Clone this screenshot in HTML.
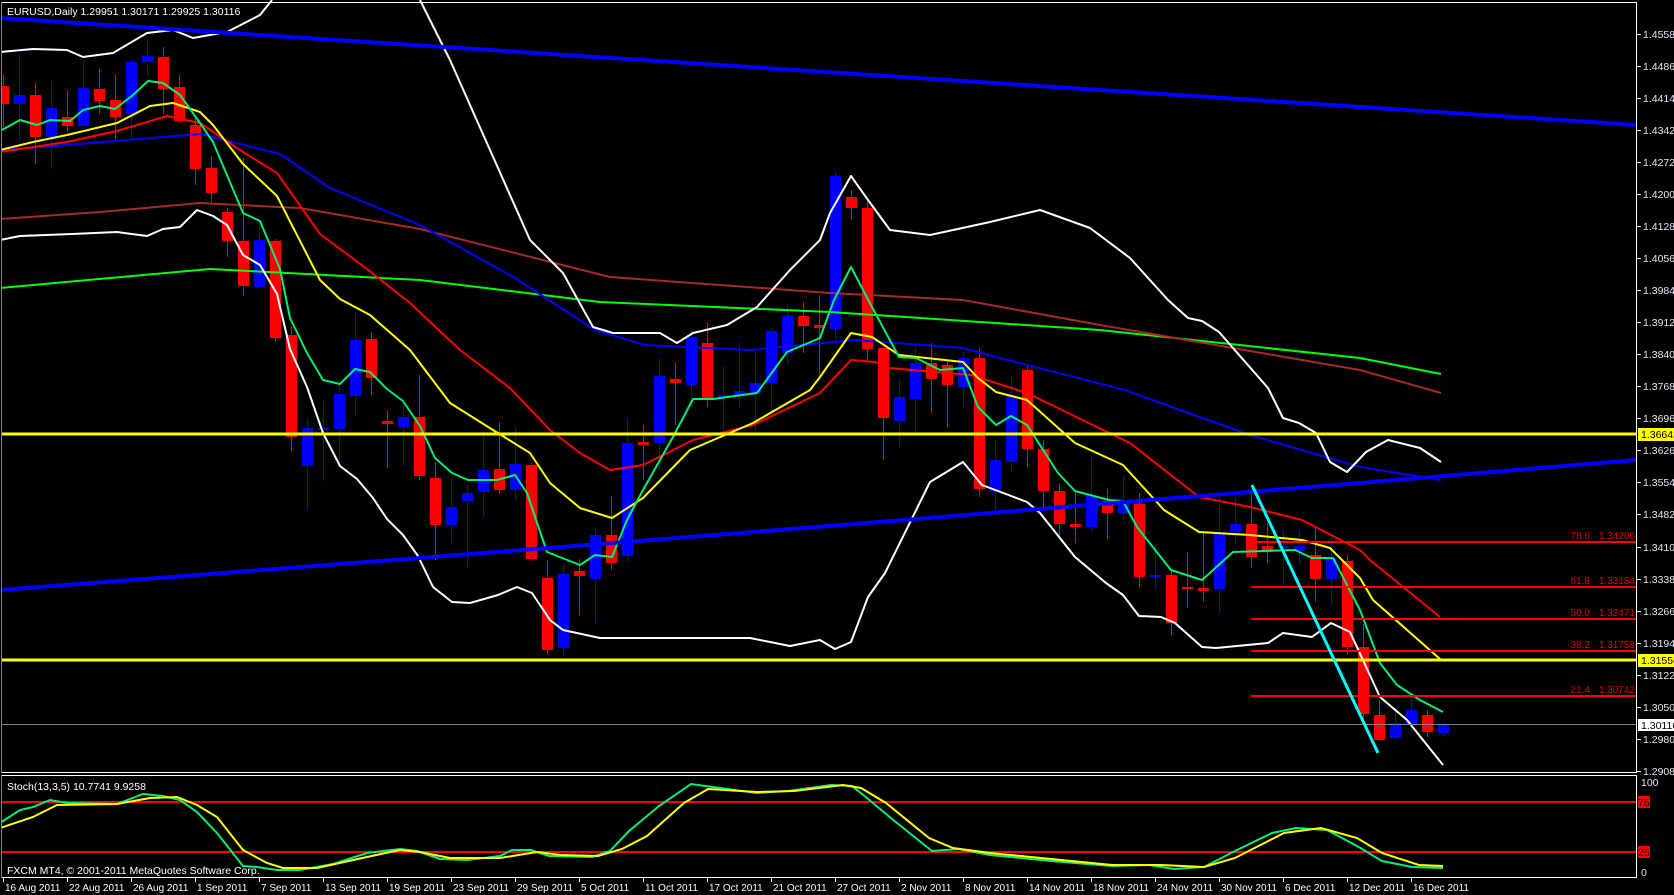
<!DOCTYPE html>
<html><head><meta charset="utf-8"><style>
html,body{margin:0;padding:0;background:#000;width:1674px;height:895px;overflow:hidden}
svg{display:block}
text{font-family:"Liberation Sans",sans-serif}
</style></head><body>
<svg width="1674" height="895" viewBox="0 0 1674 895" xmlns="http://www.w3.org/2000/svg">
<rect width="1674" height="895" fill="#000"/>
<!-- candles -->
<g stroke-linecap="butt" fill="none">
<path stroke="#f00" stroke-width="1" d="M3.5 74V127M35.5 83V164M67.5 90V131M99.5 69V114M115.5 74V139M163.5 47V114M179.5 75V123M195.5 118V185M211.5 156V202M227.5 208V257M243.5 158V296M275.5 239V341M291.5 326V451M371.5 332V395M387.5 410V468M419.5 375V480M435.5 462V560M499.5 422V493M531.5 463V561M547.5 560V655M579.5 559V615M611.5 496V570M643.5 425V480M675.5 362V425M707.5 322V407M803.5 302V353M819.5 295V375M851.5 190V220M867.5 199V360M883.5 348V460M931.5 343V413M947.5 360V427M979.5 348V497M1027.5 365V467M1043.5 440V507M1059.5 483V538M1075.5 492V543M1107.5 489V539M1139.5 493V587M1171.5 570V635M1187.5 552V608M1203.5 533V602M1251.5 493V568M1267.5 523V563M1315.5 527V602M1347.5 555V655M1363.5 624V720M1379.5 700V740M1427.5 710V737"/>
<path stroke="#f00" stroke-width="11" d="M3.5 86V104M35.5 95V137M67.5 117V126M99.5 89V101M115.5 100V117M163.5 57V89M179.5 87V121M195.5 125V169M211.5 168V193M227.5 212V241M243.5 241V286M275.5 241V338M291.5 335V437M371.5 339V378M387.5 421V424M419.5 417V476M435.5 478V525M499.5 469V490M531.5 465V559M547.5 578V650M579.5 571V576M611.5 535V563M643.5 442V445M675.5 379V383M707.5 343V400M803.5 316V326M819.5 325V328M851.5 197V208M867.5 208V349M883.5 348V418M931.5 363V379M947.5 365V385M979.5 358V489M1027.5 370V449M1043.5 449V491M1059.5 491V524M1075.5 524V527M1107.5 501V513M1139.5 504V577M1171.5 575V623M1187.5 587V589M1203.5 588V591M1251.5 524V557M1267.5 546V552M1315.5 555V579M1347.5 561V647M1363.5 647V714M1379.5 715V740M1427.5 715V732"/>
<path stroke="#00f" stroke-width="1" d="M19.5 54V141M51.5 81V169M83.5 60V129M131.5 60V139M147.5 39V77M259.5 219V288M307.5 420V510M323.5 401V481M339.5 384V464M355.5 313V416M403.5 401V466M451.5 477V543M467.5 485V568M483.5 432V517M515.5 427V499M563.5 565V655M595.5 528V623M627.5 418V562M659.5 358V470M691.5 330V407M723.5 366V430M739.5 342V407M755.5 353V437M771.5 327V413M787.5 304V363M835.5 171V343M899.5 380V447M915.5 348V437M963.5 352V407M995.5 439V513M1011.5 376V472M1091.5 457V531M1123.5 477V521M1155.5 543V589M1219.5 497V613M1235.5 498V545M1283.5 530V585M1299.5 530V563M1331.5 537V605M1395.5 708V740M1411.5 697V733M1443.5 722V737"/>
<path stroke="#00f" stroke-width="11" d="M19.5 95V104M51.5 108V137M83.5 88V126M131.5 62V114M147.5 56V62M259.5 240V287M307.5 428V466M323.5 428V430M339.5 394V429M355.5 340V396M403.5 417V427M451.5 507V525M467.5 493V501M483.5 470V492M515.5 464V490M563.5 574V648M595.5 535V579M627.5 443V556M659.5 376V443M691.5 337V385M723.5 395V397M739.5 391V395M755.5 383V393M771.5 331V383M787.5 316V353M835.5 176V329M899.5 397V421M915.5 363V399M963.5 358V387M995.5 460V492M1011.5 396V462M1091.5 496V527M1123.5 504V513M1155.5 575V577M1219.5 532V589M1235.5 524V532M1283.5 546V548M1299.5 546V551M1331.5 558V579M1395.5 723V738M1411.5 710V724M1443.5 725V733"/>
</g>
<!-- MAs -->
<g fill="none" stroke-width="2" stroke-linejoin="round">
<polyline stroke="#00ff00" points="0,288 210,269 420,280 600,302 830,312 1100,330 1360,358 1441,374"/>
<polyline stroke="#a52a2a" points="0,219 100,212 200,203 300,208 420,229 610,277 830,293 963,300 1100,325 1360,370 1441,393"/>
<polyline stroke="#0000ff" points="0,150 67,145 200,134 280,154 330,188 420,225 515,278 595,330 645,345 750,350 855,340 963,348 1000,358 1125,390 1180,410 1250,435 1360,467 1441,480"/>
<polyline stroke="#ff0000" points="0,152 67,142 117,131 167,116 200,123 240,150 277,173 320,234 367,269 410,303 460,350 510,388 550,430 580,453 610,470 643,465 693,440 753,425 820,393 851,360 875,362 889,368 971,375 1027,393 1130,443 1199,497 1250,507 1302,520 1360,550 1370,560 1440,617"/>
<polyline stroke="#ffff00" points="0,150 33,142 67,135 117,123 150,106 173,103 200,112 213,125 243,164 277,196 320,280 340,299 370,315 410,350 450,403 493,430 530,453 550,483 580,508 612,518 643,498 690,450 753,423 810,390 820,377 851,333 872,337 899,355 963,362 978,378 996,392 1027,400 1075,443 1123,465 1164,510 1199,532 1250,535 1302,540 1330,548 1360,578 1373,600 1440,659"/>
<polyline stroke="#00ee77" points="0,131 20,120 37,125 50,120 70,121 83,110 100,106 115,109 133,95 148,81 163,83 180,95 200,123 213,142 243,213 260,221 280,269 290,318 307,353 323,380 340,384 355,369 370,372 387,389 403,401 420,426 435,458 452,473 468,480 497,480 515,475 527,493 547,552 580,565 595,555 612,557 627,520 643,490 673,437 693,399 713,399 757,393 787,352 820,338 834,300 851,267 872,307 899,357 916,358 940,370 963,368 978,407 996,425 1011,416 1027,425 1058,473 1075,491 1109,500 1123,501 1137,527 1171,570 1202,580 1233,552 1295,550 1312,558 1333,558 1360,610 1380,663 1397,685 1420,700 1443,712"/>
<polyline stroke="#ffffff" points="0,52 33,49 67,50 83,57 113,53 147,33 173,30 193,38 227,32 260,15 272,0"/>
<polyline stroke="#ffffff" points="420,0 450,60 490,150 530,240 563,273 593,327 613,333 660,333 677,343 693,333 727,325 757,307 790,270 820,240 830,213 851,176 868,200 890,230 930,235 990,222 1040,210 1090,228 1130,258 1168,300 1188,318 1202,321 1219,332 1268,388 1283,418 1299,423 1316,433 1330,462 1347,472 1366,452 1388,440 1420,448 1441,462"/>
<polyline stroke="#ffffff" points="0,240 20,236 72,234 117,232 147,236 163,229 180,227 197,210 213,216 227,225 243,255 260,265 277,294 290,349 307,387 323,433 340,466 357,479 373,498 387,519 403,535 418,556 433,587 452,602 470,603 498,595 517,587 532,593 550,620 563,630 600,638 750,638 790,646 820,640 835,649 851,642 868,597 885,573 930,482 963,462 982,485 1027,502 1040,513 1075,557 1106,583 1123,595 1139,616 1161,617 1175,623 1202,647 1216,648 1268,643 1283,633 1312,637 1331,623 1350,632 1380,697 1407,720 1443,765"/>
</g>
<!-- trendlines -->
<g fill="none">
<line x1="0" y1="18" x2="1636" y2="125" stroke="#0000ff" stroke-width="4"/>
<polyline points="0,590 420,558 830,526 1360,483 1636,460" stroke="#0000ff" stroke-width="4"/>
<line x1="0" y1="434" x2="1636" y2="434" stroke="#ffff00" stroke-width="3"/>
<line x1="0" y1="660" x2="1636" y2="660" stroke="#ffff00" stroke-width="3"/>
<line x1="0" y1="724.5" x2="1636" y2="724.5" stroke="#808080" stroke-width="1"/>
<g stroke="#ff0000" stroke-width="2">
<line x1="1251" y1="542" x2="1636" y2="542"/><line x1="1251" y1="587" x2="1636" y2="587"/><line x1="1251" y1="619" x2="1636" y2="619"/><line x1="1251" y1="651" x2="1636" y2="651"/><line x1="1251" y1="696" x2="1636" y2="696"/>
</g>
<line x1="1252" y1="485" x2="1378" y2="753" stroke="#00ffff" stroke-width="3"/>
</g>
<g fill="#e00000" font-size="10" text-anchor="end">
<text x="1590" y="539">78.6</text><text x="1635" y="539">1.34200</text>
<text x="1590" y="584">61.8</text><text x="1635" y="584">1.33184</text>
<text x="1590" y="616">50.0</text><text x="1635" y="616">1.32471</text>
<text x="1590" y="648">38.2</text><text x="1635" y="648">1.31758</text>
<text x="1590" y="693">21.4</text><text x="1635" y="693">1.30742</text>
</g>
<!-- stochastic -->
<g fill="none" stroke-width="2">
<line x1="0" y1="802" x2="1636" y2="802" stroke="#ff0000"/>
<line x1="0" y1="852" x2="1636" y2="852" stroke="#ff0000"/>
<polyline stroke="#00ee77" points="0,823 20,810 33,807 50,800 67,803 117,804 143,794 163,796 180,800 197,812 217,833 243,866 257,867 277,870 300,870 333,864 367,853 400,849 417,851 440,859 467,860 500,856 512,850 531,850 549,856 592,857 610,851 629,831 659,806 691,784 720,788 757,793 788,791 831,785 852,786 867,798 892,819 932,851 959,849 990,855 1051,861 1112,866 1149,865 1174,869 1204,867 1235,851 1272,833 1296,828 1327,830 1357,846 1382,861 1412,867 1443,868"/>
<polyline stroke="#ffff00" points="0,828 33,817 57,805 117,804 150,798 177,797 197,805 217,817 243,850 267,863 283,868 317,868 367,857 400,850 420,852 450,858 500,858 537,852 561,855 598,856 622,849 647,836 684,803 708,789 757,792 794,791 843,785 861,788 886,803 929,838 953,848 990,853 1051,859 1112,865 1161,865 1204,867 1235,858 1284,833 1321,828 1357,838 1382,853 1419,865 1443,866"/>
</g>
<!-- frames -->
<g fill="none" stroke="#fff" stroke-width="1">
<rect x="1.5" y="2.5" width="1635" height="770"/>
<rect x="1.5" y="775.5" width="1635" height="102"/>
</g>
<rect x="0" y="0" width="1.5" height="895" fill="#000"/>
<!-- texts -->
<g fill="#fff" font-size="10.5">
<text x="7" y="15">EURUSD,Daily  1.29951 1.30171 1.29925 1.30116</text>
<text x="7" y="790">Stoch(13,3,5) 10.7741 9.9258</text>
<text x="7" y="874">FXCM MT4, © 2001-2011 MetaQuotes Software Corp.</text>
</g>
<!-- right axis -->
<g stroke="#fff" stroke-width="1">
<path d="M1637 34.5h4M1637 66.5h4M1637 98.5h4M1637 130.5h4M1637 162.5h4M1637 194.5h4M1637 226.5h4M1637 258.5h4M1637 290.5h4M1637 322.5h4M1637 354.5h4M1637 386.5h4M1637 418.5h4M1637 450.5h4M1637 482.5h4M1637 514.5h4M1637 547.5h4M1637 579.5h4M1637 611.5h4M1637 643.5h4M1637 675.5h4M1637 707.5h4M1637 739.5h4M1637 771.5h4"/>
<path d="M3.5 878v4M67.5 878v4M131.5 878v4M195.5 878v4M259.5 878v4M323.5 878v4M387.5 878v4M451.5 878v4M515.5 878v4M579.5 878v4M643.5 878v4M707.5 878v4M771.5 878v4M835.5 878v4M899.5 878v4M963.5 878v4M1027.5 878v4M1091.5 878v4M1155.5 878v4M1219.5 878v4M1283.5 878v4M1347.5 878v4M1411.5 878v4"/>
</g>
<g fill="#dfe8f2" font-size="10.5">
<text x="1643" y="38">1.45580</text><text x="1643" y="70">1.44860</text><text x="1643" y="102">1.44140</text><text x="1643" y="134">1.43420</text><text x="1643" y="166">1.42720</text><text x="1643" y="198">1.42000</text><text x="1643" y="230">1.41280</text><text x="1643" y="262">1.40560</text><text x="1643" y="294">1.39840</text><text x="1643" y="326">1.39120</text><text x="1643" y="358">1.38400</text><text x="1643" y="390">1.37680</text><text x="1643" y="422">1.36960</text><text x="1643" y="454">1.36260</text><text x="1643" y="486">1.35540</text><text x="1643" y="518">1.34820</text><text x="1643" y="551">1.34100</text><text x="1643" y="583">1.33380</text><text x="1643" y="615">1.32660</text><text x="1643" y="647">1.31940</text><text x="1643" y="679">1.31220</text><text x="1643" y="711">1.30500</text><text x="1643" y="743">1.29800</text><text x="1643" y="775">1.29080</text>
<text x="1641" y="786">100</text><text x="1641" y="876">0</text>
</g>
<rect x="1638" y="428" width="36" height="13" fill="#ffff00"/>
<rect x="1638" y="654" width="36" height="13" fill="#ffff00"/>
<rect x="1638" y="719" width="36" height="12" fill="#fff"/>
<rect x="1638" y="796" width="12" height="12" fill="#f00"/>
<rect x="1638" y="846" width="12" height="12" fill="#f00"/>
<g fill="#000" font-size="10.5">
<text x="1641" y="438">1.36642</text>
<text x="1641" y="664">1.31556</text>
<text x="1641" y="729">1.30116</text>
<text x="1638" y="806">75</text>
<text x="1638" y="856">25</text>
</g>
<!-- dates -->
<g fill="#fff" font-size="10">
<text x="5" y="891">16 Aug 2011</text><text x="69" y="891">22 Aug 2011</text><text x="133" y="891">26 Aug 2011</text><text x="197" y="891">1 Sep 2011</text><text x="261" y="891">7 Sep 2011</text><text x="325" y="891">13 Sep 2011</text><text x="389" y="891">19 Sep 2011</text><text x="453" y="891">23 Sep 2011</text><text x="517" y="891">29 Sep 2011</text><text x="581" y="891">5 Oct 2011</text><text x="645" y="891">11 Oct 2011</text><text x="709" y="891">17 Oct 2011</text><text x="773" y="891">21 Oct 2011</text><text x="837" y="891">27 Oct 2011</text><text x="901" y="891">2 Nov 2011</text><text x="965" y="891">8 Nov 2011</text><text x="1029" y="891">14 Nov 2011</text><text x="1093" y="891">18 Nov 2011</text><text x="1157" y="891">24 Nov 2011</text><text x="1221" y="891">30 Nov 2011</text><text x="1285" y="891">6 Dec 2011</text><text x="1349" y="891">12 Dec 2011</text><text x="1413" y="891">16 Dec 2011</text>
</g>
</svg>
</body></html>
